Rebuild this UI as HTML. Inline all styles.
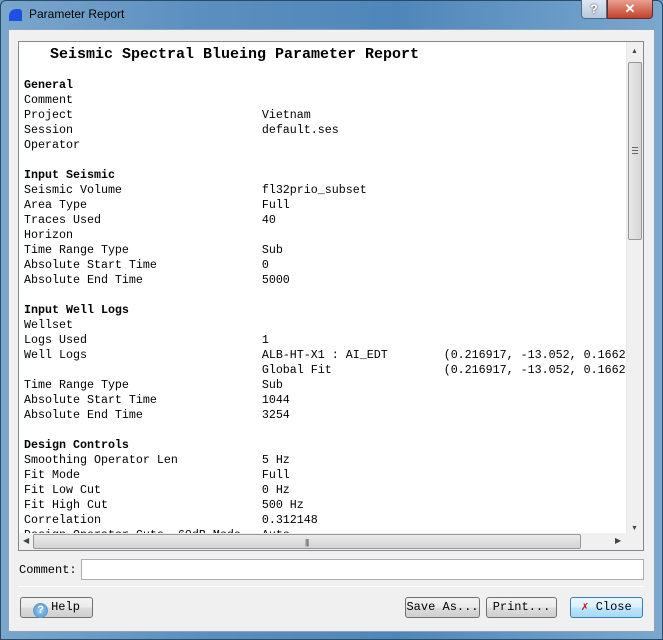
<!DOCTYPE html>
<html><head><style>
*{margin:0;padding:0;box-sizing:border-box}
body{width:663px;height:640px;overflow:hidden;background:#6b9cc4;font-family:"Liberation Sans",sans-serif;position:relative}
.frame{position:absolute;left:0;top:0;width:663px;height:640px;border-radius:6px 6px 0 0;background:linear-gradient(90deg,#7aa6cc 0%,#5b8fbf 30%,#4f86b9 60%,#7aa8cf 100%);border:1px solid #2a4a6a}
.client{position:absolute;left:8px;top:29px;width:647px;height:603px;background:#f0f0f0;border:1px solid #8aa2bb}
.title{position:absolute;left:29px;top:7px;font-size:12px;color:#000}
.ico{position:absolute;left:9px;top:9px;width:13px;height:12px;background:#2050e0;border-radius:7px 3px 0 0}
.btnq{position:absolute;left:581px;top:0;width:26px;height:19px;border:1px solid #4d6a8a;border-top:none;border-radius:0 0 0 4px;background:linear-gradient(#dfe8f2,#b7c8dc);font:bold 12px "Liberation Sans";text-align:center;color:#fff;text-shadow:0 0 2px #333;line-height:18px}
.btnx{position:absolute;left:607px;top:0;width:46px;height:19px;border:1px solid #6a2a2a;border-top:none;border-radius:0 0 4px 0;background:linear-gradient(#e8a08f,#c3412b);font:bold 13px "Liberation Sans";text-align:center;color:#fff;line-height:18px}
.box{position:absolute;left:18px;top:41px;width:626px;height:510px;border:1px solid #828790;background:#fff;overflow:hidden}
pre{position:absolute;left:5px;top:-1px;font-family:"Liberation Mono",monospace;font-size:11.67px;line-height:15px;color:#000}
.h{font-weight:bold}
.vs{position:absolute;right:0;top:0;width:17px;height:492px;background:#f0f0f0;border-left:1px solid #e8e8e8}
.hs{position:absolute;left:0;bottom:0;width:608px;height:17px;background:#f0f0f0}
.corner{position:absolute;right:0;bottom:0;width:17px;height:17px;background:#f0f0f0}
.vthumb{position:absolute;left:1px;top:20px;width:14px;height:178px;border:1px solid #979797;border-radius:2px;background:linear-gradient(90deg,#e8e8e8,#d6d6d6)}
.hthumb{position:absolute;left:14px;top:1px;width:548px;height:15px;border:1px solid #979797;border-radius:2px;background:linear-gradient(#eaeaea,#d4d4d4)}
.lbl{position:absolute;left:19px;top:563px;font:12px "Liberation Mono",monospace}
.inp{position:absolute;left:81px;top:559px;width:563px;height:21px;border:1px solid #abadb3;background:#fff}
.sep{position:absolute;left:18px;top:586px;width:626px;height:1px;background:#c8c8c8;border-bottom:1px solid #fff}
.b{position:absolute;top:597px;height:21px;border:1px solid #707070;border-radius:3px;background:linear-gradient(#f2f2f2,#ebebeb 50%,#dddddd 50%,#cfcfcf);font:12px "Liberation Mono",monospace;line-height:19px;text-align:center}
</style></head><body>
<div class="frame"></div>
<div class="ico"></div>
<div class="title">Parameter Report</div>
<div class="btnq">?</div>
<div class="btnx">✕</div>
<div class="client"></div>
<div class="box">
<pre><span class="h" style="font-size:15px;position:relative;left:26px;top:3px;line-height:22px">Seismic Spectral Blueing Parameter Report</span>

<span class="h">General</span>
Comment
Project                           Vietnam
Session                           default.ses
Operator

<span class="h">Input Seismic</span>
Seismic Volume                    fl32prio_subset
Area Type                         Full
Traces Used                       40
Horizon
Time Range Type                   Sub
Absolute Start Time               0
Absolute End Time                 5000

<span class="h">Input Well Logs</span>
Wellset
Logs Used                         1
Well Logs                         ALB-HT-X1 : AI_EDT        (0.216917, -13.052, 0.1662
                                  Global Fit                (0.216917, -13.052, 0.1662
Time Range Type                   Sub
Absolute Start Time               1044
Absolute End Time                 3254

<span class="h">Design Controls</span>
Smoothing Operator Len            5 Hz
Fit Mode                          Full
Fit Low Cut                       0 Hz
Fit High Cut                      500 Hz
Correlation                       0.312148
Design Operator Cuts -60dB Mode   Auto</pre>
<div class="vs"><div style="position:absolute;left:4px;top:6px;font-size:7px;color:#444">▲</div><div class="vthumb"><div style="position:absolute;left:3px;top:84px;width:6px;height:7px;border-top:1px solid #666;border-bottom:1px solid #666"><div style="margin-top:2px;height:1px;background:#666"></div></div></div><div style="position:absolute;left:4px;bottom:2px;font-size:7px;color:#444">▼</div></div>
<div class="hs"><div style="position:absolute;left:4px;top:3px;font-size:8px;color:#444">◀</div><div class="hthumb"><div style="position:absolute;left:271px;top:3px;font-size:8px;color:#555;letter-spacing:-1px">|||</div></div><div style="position:absolute;left:596px;top:3px;font-size:8px;color:#444">▶</div></div>
<div class="corner"></div>
</div>
<div class="lbl">Comment:</div>
<div class="inp"></div>
<div class="sep"></div>
<div class="b" style="left:20px;width:73px"><span style="display:inline-block;width:15px;height:15px;border-radius:50%;background:radial-gradient(#9fd0f0,#3a86c8);color:#fff;font:bold 11px 'Liberation Sans';line-height:15px;vertical-align:-3px;margin-right:3px">?</span>Help</div>
<div class="b" style="left:405px;width:75px">Save As...</div>
<div class="b" style="left:486px;width:71px">Print...</div>
<div class="b" style="left:570px;width:73px;border-color:#3c7fb1;background:linear-gradient(#eaf6fd,#d9f0fc 50%,#bee6fd 50%,#a7d9f5)"><span style="color:#d01010;font-weight:bold">✗</span> Close</div>
</body></html>
